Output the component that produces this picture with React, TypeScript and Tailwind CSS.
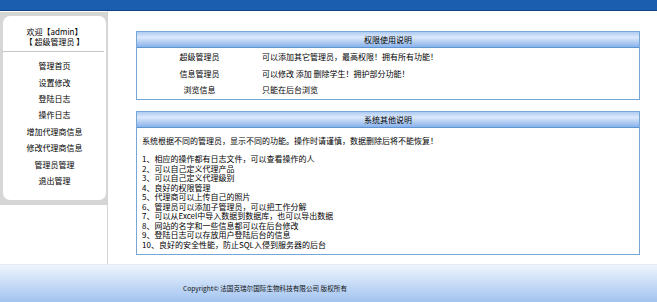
const menu = [
  "管理首页",
  "设置修改",
  "登陆日志",
  "操作日志",
  "增加代理商信息",
  "修改代理商信息",
  "管理员管理",
  "退出管理",
];

const roles = [
  { name: "超级管理员", desc: "可以添加其它管理员，最高权限！拥有所有功能！" },
  { name: "信息管理员", desc: "可以修改 添加 删除学生！拥护部分功能！" },
  { name: "浏览信息", desc: "只能在后台浏览" },
];

const features = [
  "1、相应的操作都有日志文件，可以查看操作的人",
  "2、可以自己定义代理产品",
  "3、可以自己定义代理级别",
  "4、良好的权限管理",
  "5、代理商可以上传自己的照片",
  "6、管理员可以添加子管理员，可以把工作分解",
  "7、可以从Excel中导入数据到数据库，也可以导出数据",
  "8、网站的名字和一些信息都可以在后台修改",
  "9、登陆日志可以存放用户登陆后台的信息",
  "10、良好的安全性能，防止SQL入侵到服务器的后台",
];

function Panel({ title, children }: { title: string; children: React.ReactNode }) {
  return (
    <div className="border border-[#74a7d6] bg-white">
      <div className="h-[16px] border-b border-[#5f95d2] bg-linear-to-b from-[#aecbf2] via-[#dde9fb] via-35% to-[#88b1ea] flex items-center justify-center text-[8px] leading-none text-black">
        {title}
      </div>
      {children}
    </div>
  );
}

export default function App() {
  return (
    <div className="w-[657px] h-[302px] flex flex-col bg-white font-['Noto_Sans_CJK_SC',sans-serif] text-black overflow-hidden">
      <div className="h-[11px] shrink-0 bg-[#1b5daf] border-b border-[#0e4388]" />

      <div className="flex h-[253px] shrink-0">
        <aside className="w-[108px] shrink-0 border-r border-[#d4d4d4] pt-[1px]">
          <div className="bg-[#d6d6d6] pt-[4px] pb-[5px] pl-[3px] pr-[1px]">
            <div className="bg-white rounded-[7px] pt-[11px] pb-[11px]">
              <div className="text-center text-[8px] leading-[10px]">
                <div>欢迎【admin】</div>
                <div>【 超级管理员 】</div>
              </div>
              <div className="mt-[4px] h-px bg-[#c6c6c6] mr-[2px]" />
              <ul className="pt-[6px]">
                {menu.map((item) => (
                  <li key={item} className="h-[16.4px] flex items-center justify-center text-[8px] leading-none">
                    {item}
                  </li>
                ))}
              </ul>
            </div>
          </div>
        </aside>

        <main className="flex-1 pl-[28px] pr-[17px] pt-[20px]">
          <Panel title="权限使用说明">
            <div className="pt-[1px] pb-[1px]">
              {roles.map((r) => (
                <div key={r.name} className="flex h-[16.4px] items-center text-[8px] leading-none">
                  <div className="w-[125px] text-center">{r.name}</div>
                  <div>{r.desc}</div>
                </div>
              ))}
            </div>
          </Panel>

          <div className="mt-[11px]">
            <Panel title="系统其他说明">
              <div className="pl-[5px] pt-[8px] pb-[5px] text-[8px] leading-[9.5px]">
                <p>系统根据不同的管理员，显示不同的功能。操作时请谨慎，数据删除后将不能恢复！</p>
                <ul className="mt-[8.5px]">
                  {features.map((f) => (
                    <li key={f}>{f}</li>
                  ))}
                </ul>
              </div>
            </Panel>
          </div>
        </main>
      </div>

      <footer className="flex-1 border-t border-[#e3ebf5] bg-linear-to-b from-[#eef4fc] to-[#a2c4f0] pl-[183px] pt-[19px] text-[6.6px] leading-[8px] text-[#111]">
        Copyright© 法国克瑞尔国际生物科技有限公司 版权所有
      </footer>
    </div>
  );
}
